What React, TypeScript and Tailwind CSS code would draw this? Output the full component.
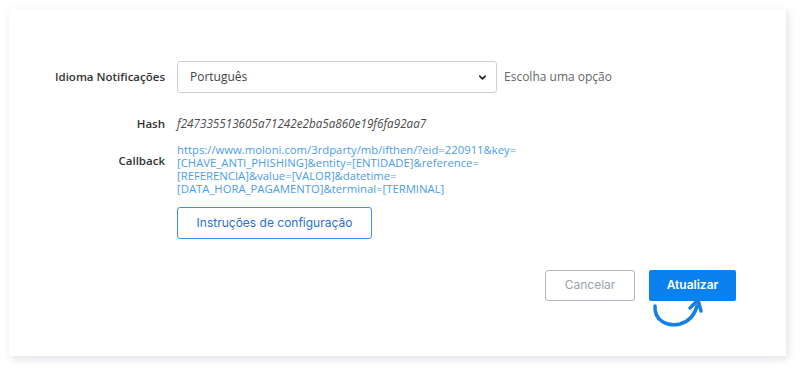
import { ChevronDown } from 'lucide-react';

const labelCls = 'w-[168px] shrink-0 pr-3 text-right text-[11.5px] font-semibold text-[#333]';

const callbackLines = [
  'https://www.moloni.com/3rdparty/mb/ifthen/?eid=220911&key=',
  '[CHAVE_ANTI_PHISHING]&entity=[ENTIDADE]&reference=',
  '[REFERENCIA]&value=[VALOR]&datetime=',
  '[DATA_HORA_PAGAMENTO]&terminal=[TERMINAL]',
];

function CurvedArrow() {
  return (
    <svg width="56" height="36" viewBox="0 0 56 36" fill="none" className="text-[#1580e6]">
      <path
        d="M5 9 C 4 24, 18 30, 30 27 C 40 24, 45 17, 47 9"
        stroke="currentColor"
        strokeWidth="3.5"
        strokeLinecap="round"
      />
      <path
        d="M40 11 L 48 3 L 51 14"
        stroke="currentColor"
        strokeWidth="3.5"
        strokeLinecap="round"
        strokeLinejoin="round"
      />
    </svg>
  );
}

export default function App() {
  return (
    <div className="w-[800px] h-[371px] bg-white pl-[9px] pt-[9px] pr-[14px] pb-[15px] font-['Open_Sans',sans-serif]">
      <div className="h-full bg-white shadow-[2px_3px_8px_rgba(40,50,90,0.14)] pt-[52px] flex flex-col">
        <div className="flex items-center">
          <div className={labelCls}>Idioma Notificações</div>
          <div className="w-[320px] h-[32px] border border-[#cfcfcf] rounded-[3px] flex items-center justify-between pl-[12px] pr-[8px] text-[12px] text-[#444]">
            <span>Português</span>
            <ChevronDown className="w-[11px] h-[11px] text-[#222]" strokeWidth={3.5} />
          </div>
          <span className="ml-[7px] text-[12px] text-[#666]">Escolha uma opção</span>
        </div>

        <div className="flex items-center mt-[22px]">
          <div className={labelCls}>Hash</div>
          <span className="text-[11.7px] italic text-[#4a4a4a]">f247335513605a71242e2ba5a860e19f6fa92aa7</span>
        </div>

        <div className="flex items-start mt-[10px]">
          <div className={`${labelCls} pt-[9px]`}>Callback</div>
          <div className="text-[11.3px] leading-[13px] text-[#4b9de9]">
            {callbackLines.map((l) => (
              <div key={l}>{l}</div>
            ))}
          </div>
        </div>

        <div className="flex mt-[12px]">
          <div className="w-[168px] shrink-0" />
          <button className="w-[195px] h-[32px] border border-[#3f8fe6] rounded-[3px] text-[12px] text-[#2a6fd6] font-['Inter',sans-serif]">
            Instruções de configuração
          </button>
        </div>

        <div className="flex justify-end gap-[14px] mt-[31px] pr-[50px]">
          <button className="w-[90px] h-[31px] border border-[#aeb7c4] rounded-[3px] text-[12px] text-[#9aa3b0] font-['Inter',sans-serif]">
            Cancelar
          </button>
          <div className="flex flex-col">
            <button className="w-[87px] h-[31px] bg-[#0a81ef] rounded-[2px] text-[12px] font-semibold text-white font-['Inter',sans-serif]">
              Atualizar
            </button>
            <div className="-mt-[4px] pl-[1px]">
              <CurvedArrow />
            </div>
          </div>
        </div>
      </div>
    </div>
  );
}
